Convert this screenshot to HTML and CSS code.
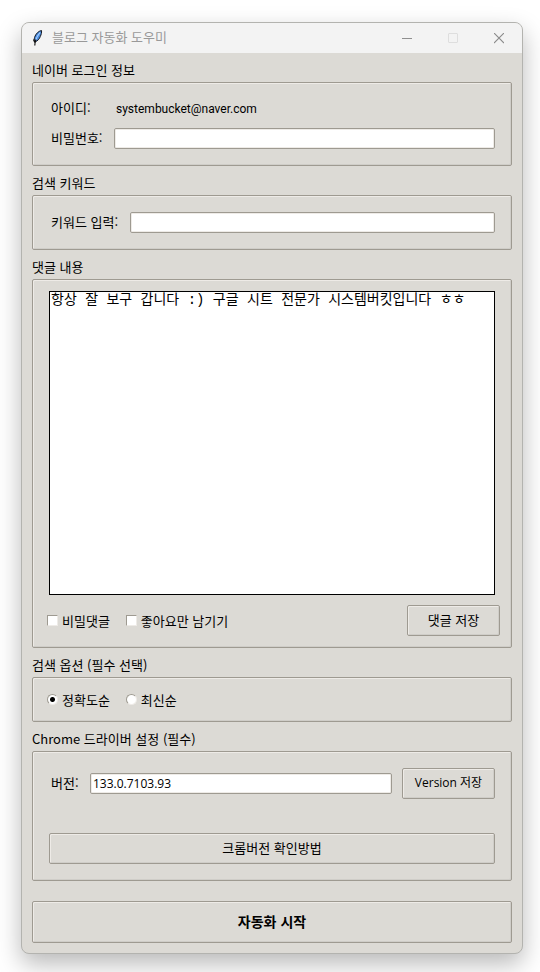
FILE: index.html
```
<!DOCTYPE html>
<html lang="ko">
  <head>
    <meta charset="UTF-8" />
    <meta name="viewport" content="width=device-width, initial-scale=1.0" />
    <title>블로그 자동화 도우미</title>
    <link rel="stylesheet" href="styles.css">
  </head>
  <body>
    <div class="window">
      <header class="title-bar">
        <svg class="app-icon" width="14" height="18" viewBox="0 0 14 18">
          <path d="M10.500 1.500 C7.500 2 4.500 5 3.500 8.500 C3 10.500 3.300 12 4 13 C6.500 12 8.500 10 9.300 7.500 C10.200 5.500 10.800 3.500 10.500 1.500 Z" fill="#4a8de0" stroke="#151a24" stroke-width="1" />
          <path d="M9 3.500 C7 6 5.500 8.500 4.800 11" fill="none" stroke="#a9d0ff" stroke-width="1.2" />
          <path d="M5 10.500 C4.200 12.500 3.800 14 3.800 16.500" fill="none" stroke="#111" stroke-width="1.2" />
          <path d="M2.500 10.500L3.800 13.500" fill="none" stroke="#111" stroke-width="1.2" />
        </svg>
        <h1 class="title">블로그 자동화 도우미</h1>
        <button class="title-btn" aria-label="최소화">
          <svg width="10" height="11" viewBox="0 0 10 11"><path d="M0 5.500H10" stroke="#8f8f8f" /></svg>
        </button>
        <button class="title-btn" aria-label="최대화" disabled>
          <svg width="10" height="11" viewBox="0 0 10 11"><rect x="0.500" y="0.500" width="9" height="9" rx="0.500" fill="none" stroke="#dedede" /></svg>
        </button>
        <button class="title-btn" aria-label="닫기">
          <svg width="10" height="11" viewBox="0 0 10 11"><path d="M0 0L10 10M10 0L0 10" stroke="#8a8a8a" stroke-width="1.1" /></svg>
        </button>
      </header>

      <main class="content">
        <h2 class="group-title">네이버 로그인 정보</h2>
        <section class="group">
          <div class="row login-row">
            <span class="row-label">아이디:</span>
            <span class="user-id">systembucket@naver.com</span>
          </div>
          <div class="row login-row">
            <label class="row-label" for="password">비밀번호:</label>
            <input class="entry" type="password" id="password" />
          </div>
        </section>

        <h2 class="group-title">검색 키워드</h2>
        <section class="group">
          <div class="row keyword-row">
            <label class="row-label" for="keyword">키워드 입력:</label>
            <input class="entry" type="text" id="keyword" />
          </div>
        </section>

        <h2 class="group-title"><label for="comment">댓글 내용</label></h2>
        <section class="group">
          <textarea class="comment" id="comment" spellcheck="false">항상 잘 보구 갑니다 :) 구글 시트 전문가 시스템버킷입니다 ㅎㅎ</textarea>
          <div class="comment-actions">
            <label class="option"><input class="check" type="checkbox" />비밀댓글</label>
            <label class="option"><input class="check" type="checkbox" />좋아요만 남기기</label>
            <button class="btn save-btn">댓글 저장</button>
          </div>
        </section>

        <h2 class="group-title">검색 옵션 (필수 선택)</h2>
        <section class="group sort-options">
          <label class="option"><input class="radio" type="radio" name="sort" checked />정확도순</label>
          <label class="option"><input class="radio" type="radio" name="sort" />최신순</label>
        </section>

        <h2 class="group-title">Chrome 드라이버 설정 (필수)</h2>
        <section class="group driver">
          <div class="row version-row">
            <label class="row-label" for="version">버전:</label>
            <input class="entry" type="text" id="version" value="133.0.7103.93" />
            <button class="btn version-btn">Version 저장</button>
          </div>
          <button class="btn help-btn">크롬버전 확인방법</button>
        </section>

        <button class="btn start-btn">자동화 시작</button>
      </main>
    </div>
  </body>
</html>
```

FILE: styles.css
```
* {
  box-sizing: border-box;
}
body {
  margin: 0;
  padding: 22px 17px 18px 21px;
  background-color: #fff;
  color: #000;
  font-family: "Noto Sans CJK KR", sans-serif;
  font-size: 13px;
  line-height: 20px;
}
button,
input {
  font: inherit;
  color: inherit;
}

.window {
  border: 1px solid #b3b3af;
  border-radius: 8px;
  background-color: #dcdad5;
  box-shadow: 0 10px 24px rgba(0, 0, 0, 0.28);
  overflow: hidden;
}

.title-bar {
  display: flex;
  align-items: center;
  height: 30px;
  padding-left: 9px;
  background-color: #f3f3f3;
}
.title {
  flex: 1;
  margin: 0 0 0 7px;
  padding-bottom: 2px;
  font-size: 13px;
  font-weight: 400;
  color: #999;
}
.title-btn {
  display: flex;
  align-items: center;
  justify-content: center;
  width: 46px;
  height: 30px;
  padding: 0;
  border: none;
  background-color: transparent;
}

.content {
  padding: 0 10px 10px;
}
.group-title {
  margin: 0;
  padding: 7px 0 2px;
  font-size: 13px;
  font-weight: 400;
}

/* raised frame shared by the groups and buttons */
.group,
.btn {
  border: 1px solid #9e9a91;
  border-radius: 2px;
  background-color: #dcdad5;
  box-shadow: inset 1px 1px #eeebe7, inset -1px -1px #cfcdc8;
}
.group {
  padding: 11px;
}
.btn {
  height: 31px;
  padding: 0 8px 2px;
  white-space: nowrap;
}

.row {
  display: flex;
  align-items: center;
  padding: 5px 5px 5px 7px;
}
.row-label {
  flex: none;
  padding-bottom: 2px;
  line-height: 18px;
}
.login-row {
  height: 30px;
  padding-top: 4px;
}
.login-row .row-label {
  width: 63px;
}
.keyword-row .row-label {
  width: 79px;
}
.version-row .row-label {
  width: 39px;
}
.user-id {
  padding-left: 2px;
  font-family: Roboto, sans-serif;
  font-size: 12px;
}
.entry {
  flex: 1;
  min-width: 0;
  height: 21px;
  padding: 0 2px;
  border: 1px solid #9e9a91;
  border-radius: 2px;
  background-color: #fff;
  box-shadow: inset 0 0 0 1px #eeebe7;
  font-family: "Open Sans", "Noto Sans CJK KR", sans-serif;
  font-size: 12px;
  outline: none;
}

.comment {
  display: block;
  width: calc(100% - 10px);
  height: 304px;
  margin: 0 5px;
  padding: 0 1px;
  border: 1px solid #000;
  background-color: #fff;
  color: #000;
  font-family: "Liberation Mono", "Noto Sans CJK KR", monospace;
  font-size: 14px;
  line-height: 16px;
  resize: none;
  outline: none;
}
.comment-actions {
  display: flex;
  align-items: center;
  gap: 16px;
  margin-top: 10px;
  padding-left: 3px;
}
.save-btn {
  width: 93px;
  margin-left: auto;
}

.option {
  display: flex;
  align-items: center;
  gap: 4px;
}
.check,
.radio {
  appearance: none;
  width: 11px;
  height: 11px;
  margin: 0;
  border: 1px solid;
  border-color: #9e9a91 #eeebe7 #eeebe7 #9e9a91;
  background-color: #fff;
}
.check:checked {
  background-color: #000;
  box-shadow: inset 0 0 0 2px #fff;
}
.radio {
  border-radius: 50%;
}
.radio:checked {
  background-image: radial-gradient(circle, #000 2px, transparent 3px);
}
.sort-options {
  display: flex;
  gap: 16px;
  height: 45px;
  padding-left: 14px;
}

.driver {
  padding-bottom: 16px;
}
.version-row {
  margin-bottom: 29px;
}
.version-btn {
  width: 93px;
  margin-left: 10px;
  font-family: "Open Sans", "Noto Sans CJK KR", sans-serif;
  font-size: 12px;
}
.help-btn {
  display: block;
  width: calc(100% - 10px);
  margin: 0 5px;
}
.start-btn {
  display: block;
  width: 100%;
  height: 42px;
  margin-top: 20px;
  font-size: 14px;
  font-weight: 700;
}
```
